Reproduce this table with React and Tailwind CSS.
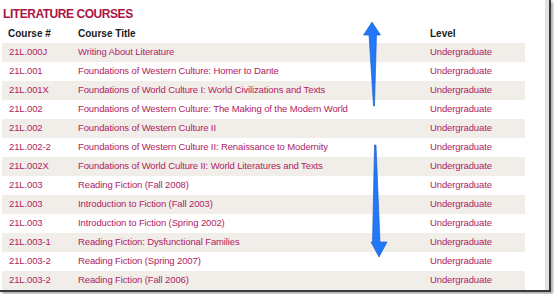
import React from "react";

const rows = [
  ["21L.000J", "Writing About Literature"],
  ["21L.001", "Foundations of Western Culture: Homer to Dante"],
  ["21L.001X", "Foundations of World Culture I: World Civilizations and Texts"],
  ["21L.002", "Foundations of Western Culture: The Making of the Modern World"],
  ["21L.002", "Foundations of Western Culture II"],
  ["21L.002-2", "Foundations of Western Culture II: Renaissance to Modernity"],
  ["21L.002X", "Foundations of World Culture II: World Literatures and Texts"],
  ["21L.003", "Reading Fiction (Fall 2008)"],
  ["21L.003", "Introduction to Fiction (Fall 2003)"],
  ["21L.003", "Introduction to Fiction (Spring 2002)"],
  ["21L.003-1", "Reading Fiction: Dysfunctional Families"],
  ["21L.003-2", "Reading Fiction (Spring 2007)"],
  ["21L.003-2", "Reading Fiction (Fall 2006)"],
];

export default function App() {
  return (
    <div
      className="relative w-[554px] h-[294px] bg-white overflow-hidden"
      style={{ fontFamily: '"Liberation Sans", Arial, sans-serif' }}
    >
      <div className="w-[551px] h-[292px] border-r-2 border-b-2 border-[#3a3a3a] shadow-[2px_2px_3px_rgba(0,0,0,0.35)] flex">
        <div className="w-[545px] h-full flex flex-col">
          <div className="h-[24px] pt-[4px] pl-[3px] flex items-center text-[12px] font-bold tracking-[-0.45px] text-[#ab1446] leading-none">
            LITERATURE COURSES
          </div>
          <div className="h-[19px] flex items-center pl-[8px] text-[10px] font-bold text-[#1a1a1a]">
            <div className="w-[70px]">Course #</div>
            <div className="w-[352px]">Course Title</div>
            <div>Level</div>
          </div>
          <div className="pl-[2px]">
            {rows.map(([num, title], i) => (
              <div
                key={i}
                className={`w-[523px] h-[19px] flex items-center pl-[7px] text-[9.5px] tracking-[-0.12px] text-[#b01b62] ${
                  i % 2 === 0 ? "bg-[#f1eeea]" : "bg-white"
                }`}
              >
                <div className="w-[69px] whitespace-nowrap">{num}</div>
                <div className="w-[352px] whitespace-nowrap">{title}</div>
                <div>Undergraduate</div>
              </div>
            ))}
          </div>
        </div>
        <div className="w-[4px] h-full bg-[#e5e2dd]" />
      </div>
      <svg
        className="absolute left-0 top-0 pointer-events-none"
        width="554"
        height="294"
        viewBox="0 0 554 294"
      >
        <polygon
          points="372,22 380.5,35 376.5,35 374.5,106 373.5,106 369,35 363.5,35"
          fill="#2178fb"
          stroke="#1656c0"
          strokeWidth="0.6"
        />
        <polygon
          points="374.5,145 376,145 380,242 387,242 379,257 371,242 372.5,242"
          fill="#2178fb"
          stroke="#1656c0"
          strokeWidth="0.6"
        />
      </svg>
    </div>
  );
}
